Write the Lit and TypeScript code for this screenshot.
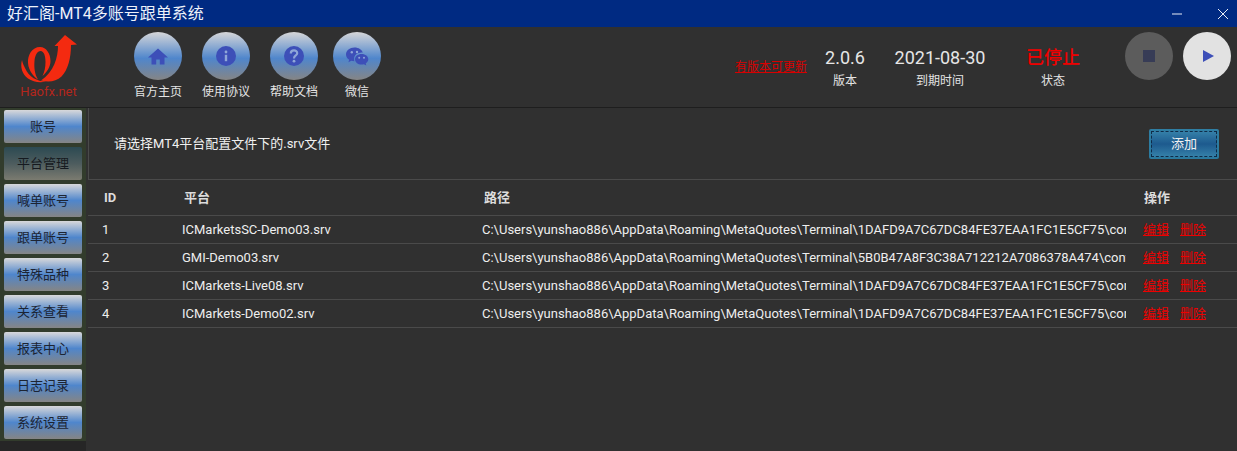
import { LitElement, html, css, svg } from "lit";
import { customElement } from "lit/decorators.js";

const SEP = "\\";
const makePath = (hash: string, file: string) =>
  ["C:", "Users", "yunshao886", "AppData", "Roaming", "MetaQuotes", "Terminal", hash, "config", file].join(SEP);
const H1 = "1DAFD9A7C67DC84FE37EAA1FC1E5CF75";
const H2 = "5B0B47A8F3C38A712212A7086378A474";
const rows = [
  { id: 1, name: "ICMarketsSC-Demo03.srv", path: makePath(H1, "ICMarketsSC-Demo03.srv") },
  { id: 2, name: "GMI-Demo03.srv", path: makePath(H2, "GMI-Demo03.srv") },
  { id: 3, name: "ICMarkets-Live08.srv", path: makePath(H1, "ICMarkets-Live08.srv") },
  { id: 4, name: "ICMarkets-Demo02.srv", path: makePath(H1, "ICMarkets-Demo02.srv") },
];
const menu = ["账号", "平台管理", "喊单账号", "跟单账号", "特殊品种", "关系查看", "报表中心", "日志记录", "系统设置"];

const ICON = "#3d4fb8";
const icons = {
  home: svg`<path fill="${ICON}" d="M12 4.5 2 13.5H5.5V20.5H10.2V15.5H13.8V20.5H18.5V13.5H22Z"/>`,
  info: svg`<circle cx="12" cy="12" r="10" fill="${ICON}"/><circle cx="12" cy="8" r="1.4" fill="#8fa6d8"/><rect x="10.8" y="10.8" width="2.4" height="6.4" fill="#8fa6d8"/>`,
  help: svg`<circle cx="12" cy="12" r="10" fill="${ICON}"/><path fill="none" stroke="#8fa6d8" stroke-width="2.2" d="M8.8 9.4C8.8 5.4 15.2 5.4 15.2 9.2C15.2 11.6 12 11.4 12 14.4"/><circle cx="12" cy="17.2" r="1.4" fill="#8fa6d8"/>`,
  chat: svg`<path fill="${ICON}" d="M9.5 3.5C4.8 3.5 1 6.6 1 10.4C1 12.6 2.2 14.4 4.2 15.7L3.4 18.2L6.3 16.7C7.3 17 8.3 17.2 9.4 17.2C9.1 16.5 9 15.8 9 15C9 11.4 12.4 8.6 16.8 8.6C17.2 8.6 17.5 8.6 17.8 8.7C16.9 5.7 13.6 3.5 9.5 3.5Z"/>
    <path fill="${ICON}" d="M16.6 10C12.8 10 10 12.4 10 15.3C10 18.2 12.8 20.6 16.6 20.6C17.4 20.6 18.2 20.5 18.9 20.3L21.3 21.6L20.7 19.4C22.3 18.3 23.3 16.9 23.3 15.3C23.3 12.4 20.4 10 16.6 10Z"/>
    <circle cx="6.8" cy="8.2" r="1.2" fill="#8fa6d8"/><circle cx="12" cy="8" r="1.2" fill="#8fa6d8"/><circle cx="14.2" cy="13.8" r="1" fill="#8fa6d8"/><circle cx="19" cy="13.8" r="1" fill="#8fa6d8"/>`,
};
const nav = [
  { label: "官方主页", icon: icons.home },
  { label: "使用协议", icon: icons.info },
  { label: "帮助文档", icon: icons.help },
  { label: "微信", icon: icons.chat },
];

@customElement("app-root")
export class AppRoot extends LitElement {
  static styles = css`
    :host {
      display: block;
      width: 1237px;
      height: 451px;
      overflow: hidden;
      background: #303030;
      color: #e4e4e4;
      font: 13px/1.2 Roboto, "Noto Sans CJK SC", sans-serif;
    }
    .titlebar {
      height: 27px;
      background: #002a82;
      display: flex;
      align-items: center;
      padding: 0 9px 0 7px;
    }
    .title { font-size: 16px; color: #eef2fa; flex: 1; }
    .winbtn { display: flex; gap: 36px; }
    .winbtn svg { display: block; width: 10px; height: 10px; }
    .header {
      height: 81px;
      display: flex;
      align-items: flex-start;
      border-bottom: 1px solid #1e1e1e;
      box-sizing: border-box;
    }
    .logo { width: 134px; flex: none; }
    .logo-box { width: 97px; display: flex; flex-direction: column; align-items: center; padding: 7px 0 0 0; }
    .logo svg { display: block; width: 60px; height: 50px; margin-left: 1px; }
    .logo-text { color: #b4261c; font-size: 13px; line-height: 16px; margin: 0; }
    .nav { display: flex; padding-top: 5px; }
    .nav-item { width: 48px; margin-right: 20px; display: flex; flex-direction: column; align-items: center; }
    .nav-item:nth-child(3) { margin-right: 15px; }
    .circle {
      width: 48px; height: 48px; border-radius: 50%;
      background: linear-gradient(#d6d6d8 0%, #4f86cc 55%, #858585 100%);
      display: flex; align-items: center; justify-content: center;
    }
    .circle svg { width: 24px; height: 24px; }
    .nav-label { margin-top: 5px; font-size: 12px; line-height: 15px; color: #e4e4e4; white-space: nowrap; }
    .info { margin-left: auto; display: flex; align-items: flex-start; padding: 5px 6px 0 0; font-size: 12px; }
    .update { width: 72px; margin-top: 28px; line-height: 14px; color: #d80000; text-decoration: underline; }
    .stat { display: flex; flex-direction: column; align-items: center; padding-top: 16px; }
    .stat.v { width: 76px; }
    .stat.d { width: 114px; }
    .stat.s { width: 112px; margin-right: 16px; }
    .stat b { font-weight: 400; font-size: 18px; line-height: 20px; color: #e6e6e6; }
    .stat.s b { color: #f00000; font-weight: 500; }
    .stat span { margin-top: 6px; line-height: 15px; }
    .round { width: 48px; height: 48px; border-radius: 50%; display: flex; align-items: center; justify-content: center; }
    .round.stop { background: #5c5c5c; margin-right: 10px; }
    .round.play { background: #e2e2e2; }
    .stop i { display: block; width: 12px; height: 12px; background: #373c56; }
    .play svg { width: 14px; height: 14px; display: block; }
    .body { display: flex; height: 343px; }
    .side { width: 86px; flex: none; margin-right: 2px; background: #262626; }
    .side-list { background: #323c2c; padding: 2px 4px 0; height: 333px; box-sizing: border-box; display: flex; flex-direction: column; gap: 4px; }
    .side-btn {
      height: 33px; flex: none; border-radius: 2px; display: flex; align-items: center; justify-content: center;
      color: #1c2433; font-size: 13px;
      background: linear-gradient(#d8d8da 0%, #4f86cc 50%, #858585 100%);
    }
    .side-btn.active { background: linear-gradient(#2c4a52 0%, #4d5c5e 50%, #7b7b70 100%); color: #161a20; }
    .main { flex: 1; min-width: 0; }
    .toolbar {
      height: 72px; box-sizing: border-box;
      border-left: 1px solid #4a4a4a; border-bottom: 1px solid #4a4a4a;
      display: flex; align-items: center; justify-content: space-between;
      padding: 0 18px 0 25px;
    }
    .toolbar p { margin: 0; color: #f0f0f0; }
    .add {
      width: 70px; height: 30px; box-sizing: border-box; padding: 2px; border-radius: 2px;
      background: linear-gradient(#2f7ea3, #2a7a9f); display: flex;
    }
    .add span {
      flex: 1; border: 1px dashed #0f2c48;
      background: linear-gradient(#347fa8 0%, #1d5a8e 50%, #347fa8 100%);
      display: flex; align-items: center; justify-content: center; color: #f0f0f0; font-size: 13px;
    }
    .row {
      display: grid; grid-template-columns: 94px 300px 644px 17px 1fr;
      align-items: center; height: 28px; box-sizing: border-box;
      border-bottom: 1px solid #4a4a4a; color: #eeeeee;
    }
    .row.head { height: 36px; font-weight: 700; color: #dcdcdc; }
    .row > div { white-space: nowrap; overflow: hidden; }
    .row > .c1 { padding-left: 14px; }
    .row.head > .c1, .row.head > .c2, .row.head > .c3 { padding-left: 2px; }
    .row.head > .c1 { padding-left: 16px; }
    .row.head > .c5 { padding-left: 1px; }
    .ops { display: flex; gap: 11px; }
    .ops a { color: #ee0000; text-decoration: underline; }
  `;

  render() {
    return html`
      <div class="titlebar">
        <div class="title">好汇阁-MT4多账号跟单系统</div>
        <div class="winbtn">
          <svg viewBox="0 0 10 10"><path d="M0 5H10" stroke="#e8ecf6" fill="none"/></svg>
          <svg viewBox="0 0 10 10"><path d="M0 0L10 10M10 0L0 10" stroke="#e8ecf6" fill="none"/></svg>
        </div>
      </div>
      <div class="header">
        <div class="logo">
          <div class="logo-box">
            <svg viewBox="0 0 60 50">
              <g fill="#f42a10">
                <path d="M46 1 35.5 12 39 12C39 23 35 38 22 46.5C30 48.5 37 47.5 42.5 42.5C49 36 52 24 52 11L58 10.5Z"/>
                <path fill-rule="evenodd" d="M21 13C13 13 8.5 21 9 29C9.5 37 15 43 19 45.5C15.5 40 15 33 15.5 27C16 21 18.5 17 21.5 17C25 17 26.5 22 26.5 28C26.5 33 25.5 38 23.5 42C28 38 31.5 33 31.5 27C31.5 20 27.5 13 21 13Z"/>
                <path d="M3 26C1 33 3 40 9 44.5C14 48 21 49 27 47.5C18 47.5 10 43 6 34C5 32 3.5 29 3 26Z"/>
              </g>
            </svg>
            <div class="logo-text">Haofx.net</div>
          </div>
        </div>
        <div class="nav">
          ${nav.map(
            (n) => html`<div class="nav-item">
              <div class="circle"><svg viewBox="0 0 24 24">${n.icon}</svg></div>
              <div class="nav-label">${n.label}</div>
            </div>`
          )}
        </div>
        <div class="info">
          <a class="update">有版本可更新</a>
          <div class="stat v"><b>2.0.6</b><span>版本</span></div>
          <div class="stat d"><b>2021-08-30</b><span>到期时间</span></div>
          <div class="stat s"><b>已停止</b><span>状态</span></div>
          <div class="round stop"><i></i></div>
          <div class="round play"><svg viewBox="0 0 14 14"><path d="M3 1 14 7 3 13Z" fill="#3d4fb8"/></svg></div>
        </div>
      </div>
      <div class="body">
        <div class="side">
          <div class="side-list">
            ${menu.map((m, i) => html`<div class="side-btn ${i === 1 ? "active" : ""}">${m}</div>`)}
          </div>
        </div>
        <div class="main">
          <div class="toolbar">
            <p>请选择MT4平台配置文件下的.srv文件</p>
            <div class="add"><span>添加</span></div>
          </div>
          <div class="row head">
            <div class="c1">ID</div><div class="c2">平台</div><div class="c3">路径</div><div></div><div class="c5">操作</div>
          </div>
          ${rows.map(
            (r) => html`<div class="row">
              <div class="c1">${r.id}</div><div class="c2">${r.name}</div><div class="c3">${r.path}</div><div></div>
              <div class="ops"><a>编辑</a><a>删除</a></div>
            </div>`
          )}
        </div>
      </div>
    `;
  }
}
